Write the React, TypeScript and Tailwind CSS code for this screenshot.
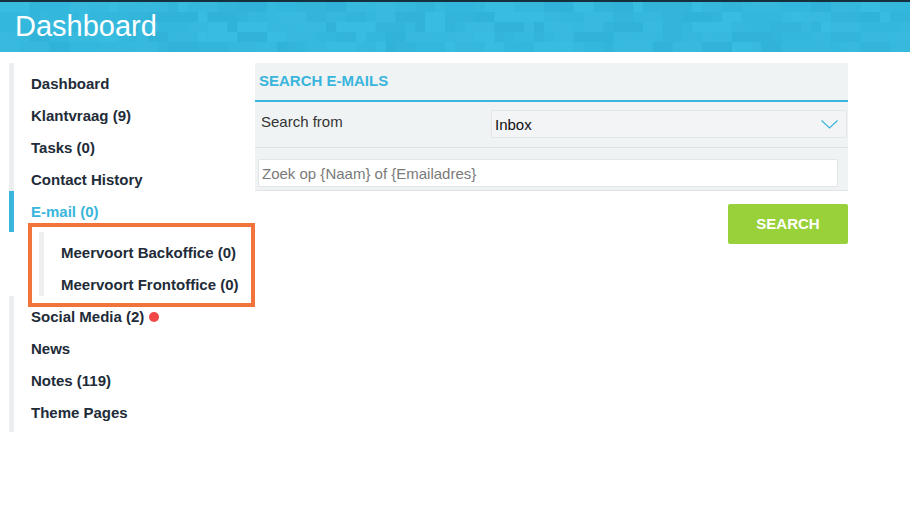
import React from 'react'

const SHADES = ['#34b7dc', '#36b9dd', '#33b5da', '#37badd', '#31b2d8', '#35b8dc', '#38bcdf']

function Mosaic() {
  // pseudo-random pixel tiles for the header background
  let seed = 17
  const rnd = () => {
    seed = (seed * 9301 + 49297) % 233280
    return seed / 233280
  }
  const tiles: { x: number; y: number; w: number; c: string }[] = []
  for (let y = 0; y < 5; y++) {
    let x = 0
    while (x < 920) {
      const w = 10 * (1 + Math.floor(rnd() * 3))
      tiles.push({ x, y: y * 10, w, c: SHADES[Math.floor(rnd() * SHADES.length)] })
      x += w
    }
  }
  return (
    <svg className="absolute inset-0 h-full w-full" viewBox="0 0 920 50" preserveAspectRatio="none">
      {tiles.map((t, i) => (
        <rect key={i} x={t.x} y={t.y} width={t.w} height={10} fill={t.c} />
      ))}
    </svg>
  )
}

const topItems = ['Dashboard', 'Klantvraag (9)', 'Tasks (0)', 'Contact History']
const subItems = ['Meervoort Backoffice (0)', 'Meervoort Frontoffice (0)']
const bottomItems = ['News', 'Notes (119)', 'Theme Pages']

function Item({ label, children }: { label: string; children?: React.ReactNode }) {
  return (
    <div className="flex h-[32px] items-start pl-[17px] pt-[13px] text-[15px] font-bold leading-[16px] text-[#222b38]">
      {label}
      {children}
    </div>
  )
}

export default function App() {
  return (
    <div className="min-h-[508px] w-[910px] bg-white" style={{ fontFamily: '"Liberation Sans", Arial, sans-serif' }}>
      <header className="relative h-[52px] border-t-2 border-[#17303d] bg-[#35b8dc]">
        <Mosaic />
        <h1 className="relative pl-[15px] pt-[10px] text-[29px] leading-none font-normal text-white">Dashboard</h1>
      </header>

      <div className="flex pt-[11px]">
        {/* sidebar */}
        <aside className="relative ml-[9px] w-[246px]">
          <div className="border-l-[5px] border-[#eceef0]">
            {topItems.map((t) => (
              <Item key={t} label={t} />
            ))}
          </div>
          <div className="h-[41px] border-l-[5px] border-[#3ab5dc] pl-[17px] pt-[13px] text-[15px] font-bold leading-[16px] text-[#3ab5dc]">
            E-mail (0)
          </div>
          <div className="ml-[30px] border-l-[5px] border-[#eceef0]">
            {subItems.map((t) => (
              <Item key={t} label={t} />
            ))}
          </div>
          <div className="border-l-[5px] border-[#eceef0] pb-[8px]">
            <Item label="Social Media (2)">
              <span className="ml-[5px] mt-[3px] h-[10px] w-[10px] rounded-full bg-[#f04646]" />
            </Item>
            {bottomItems.map((t) => (
              <Item key={t} label={t} />
            ))}
          </div>
          {/* annotation box */}
          <div className="pointer-events-none absolute left-[19px] top-[160px] h-[84px] w-[227px] border-4 border-[#f2743a]" />
        </aside>

        {/* main */}
        <main className="flex w-[593px] flex-col">
          <section className="border-b border-[#e0e4e6] bg-[#f0f3f4]">
            <div className="flex h-[39px] items-center border-b-2 border-[#3ab5dc] pl-[4px] text-[15px] font-bold text-[#3ab5dc]">
              SEARCH E-MAILS
            </div>
            <div className="flex h-[46px] border-b border-[#dfe3e5]">
              <div className="w-[236px] pl-[6px] pt-[11px] text-[15px] leading-[17px] text-[#333]">Search from</div>
              <div className="mt-[8px] flex h-[28px] w-[356px] items-center justify-between rounded-[2px] border border-[#e4e7e9] bg-[#f2f4f5] pl-[3px] pr-[8px]">
                <span className="pt-[3px] text-[15px] text-[#111]">Inbox</span>
                <svg width="17" height="9" viewBox="0 0 17 9" fill="none">
                  <path d="M0.5 0.5 L8.5 8 L16.5 0.5" stroke="#3ab5dc" strokeWidth="1.2" />
                </svg>
              </div>
            </div>
            <div className="pb-[3px] pl-[3px] pr-[10px] pt-[11px]">
              <input
                className="h-[28px] w-full rounded-[2px] border border-[#e3e6e8] bg-white pl-[3px] text-[15px] text-[#333] placeholder:text-[#7a7a7a] outline-none"
                placeholder="Zoek op {Naam} of {Emailadres}"
              />
            </div>
          </section>
          <button className="mt-[13px] h-[40px] w-[120px] self-end rounded-[2px] bg-[#99d13b] text-[15px] font-bold text-white">
            SEARCH
          </button>
        </main>
      </div>
    </div>
  )
}
